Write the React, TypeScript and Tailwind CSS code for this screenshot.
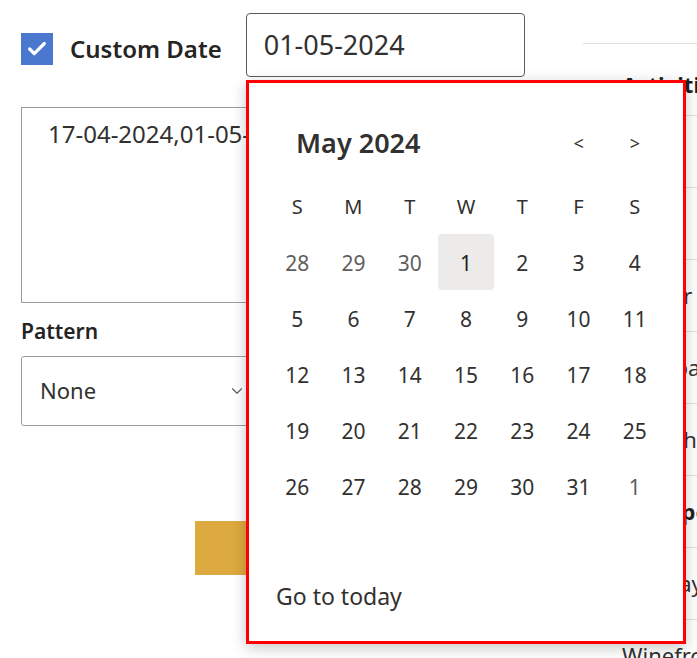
import { Check, ChevronDown } from "lucide-react";

const weekdays = ["S", "M", "T", "W", "T", "F", "S"];

type Day = { n: number; out?: boolean; sel?: boolean };

function buildWeeks(): Day[][] {
  const days: Day[] = [{ n: 28, out: true }, { n: 29, out: true }, { n: 30, out: true }];
  for (let i = 1; i <= 31; i++) days.push({ n: i, sel: i === 1 });
  days.push({ n: 1, out: true });
  const weeks: Day[][] = [];
  for (let i = 0; i < days.length; i += 7) weeks.push(days.slice(i, i + 7));
  return weeks;
}

const rows = [
  { text: "Activities", bold: true },
  { text: "Florist" },
  { text: "Decor" },
  { text: "Dinner" },
  { text: "Club bar" },
  { text: "Brunch" },
  { text: "Transport", bold: true },
  { text: "Spa day" },
  { text: "Winefront tour" },
];

function CalendarPopup() {
  const weeks = buildWeeks();
  return (
    <div className="absolute left-[246px] top-[80px] w-[440px] h-[564px] border-[3px] border-[#ff0000] bg-white shadow-[0_4px_14px_rgba(0,0,0,0.22)] px-[20px] pt-[32px] flex flex-col">
      <div className="grid grid-cols-7 h-[56px] items-center">
        <div className="col-span-5 pl-[27px] text-[27px] font-semibold text-[#323130]">May 2024</div>
        <button className="h-full flex items-center justify-center text-[18px] text-[#323130]">&lt;</button>
        <button className="h-full flex items-center justify-center text-[18px] text-[#323130]">&gt;</button>
      </div>
      <div className="mt-[8px] grid grid-cols-7 h-[56px] items-center">
        {weekdays.map((d, i) => (
          <div key={i} className="text-center text-[20px] text-[#323130]">
            {d}
          </div>
        ))}
      </div>
      {weeks.map((w, wi) => (
        <div key={wi} className="grid grid-cols-7 h-[56px]">
          {w.map((d, di) => (
            <div key={di} className="flex items-center justify-center">
              <div
                className={
                  "w-[56px] h-[56px] -mt-[2px] pt-[3px] flex items-center justify-center rounded-[4px] text-[21px] " +
                  (d.sel ? "bg-[#edebe9] text-[#201f1e]" : d.out ? "text-[#5f5e5c]" : "text-[#323130]")
                }
              >
                {d.n}
              </div>
            </div>
          ))}
        </div>
      ))}
      <div className="h-[56px]" />
      <div className="mt-[5px] h-[40px] flex items-center pl-[7px] text-[23px] text-[#323130]">Go to today</div>
    </div>
  );
}

export default function App() {
  return (
    <div
      className="relative w-[697px] h-[658px] overflow-hidden bg-white text-[#323130]"
      style={{ fontFamily: '"Noto Sans", "Open Sans", sans-serif' }}
    >
      <div className="flex">
        <div className="w-[583px] shrink-0 pl-[21px] pt-[13px]">
          <div className="flex items-start">
            <div className="mt-[20px] w-[32px] h-[32px] bg-[#4a78cf] flex items-center justify-center">
              <Check className="w-[22px] h-[22px] text-white" strokeWidth={3.5} />
            </div>
            <span className="mt-[18px] ml-[17px] text-[24px] leading-[36px] font-semibold text-[#252423]">Custom Date</span>
            <div className="ml-[24px] w-[279px] h-[64px] border border-[#5c5c5c] rounded-[4px] flex items-center pl-[17px] text-[27px] text-[#323130]">
              01-05-2024
            </div>
          </div>
          <div className="mt-[30px] w-[270px] h-[196px] border-[1.5px] border-[#9d9d9d] pl-[26px] pt-[8px] text-[24px] text-[#323130] whitespace-nowrap overflow-hidden">
            17-04-2024,01-05-2024
          </div>
          <div className="mt-[13px] text-[21px] font-semibold text-[#252423]">Pattern</div>
          <div className="mt-[8px] w-[270px] h-[70px] border-[1.5px] border-[#9d9d9d] rounded-[3px] flex items-center pl-[18px] pr-[44px] text-[22px] text-[#323130]">
            <span className="flex-1">None</span>
            <ChevronDown className="w-[18px] h-[18px] text-[#605e5c]" strokeWidth={1.5} />
          </div>
          <div className="mt-[95px] ml-[174px] w-[170px] h-[54px] bg-[#ddaa3f] text-white flex items-center justify-center pl-[40px] text-[20px] font-semibold">
            Save
          </div>
        </div>
        <div className="flex-1 pt-[43px]">
          <div className="border-t border-[#e1dfdd]">
            {rows.map((r, i) => (
              <div
                key={i}
                className={
                  "h-[72px] border-b border-[#e1dfdd] flex items-center pl-[39px] whitespace-nowrap text-[22px] " +
                  (r.bold ? "font-bold text-[#201f1e] " : "text-[#323130] ") +
                  (i === 0 ? "pt-[10px]" : "")
                }
              >
                {r.text}
              </div>
            ))}
          </div>
        </div>
      </div>
      <CalendarPopup />
    </div>
  );
}
